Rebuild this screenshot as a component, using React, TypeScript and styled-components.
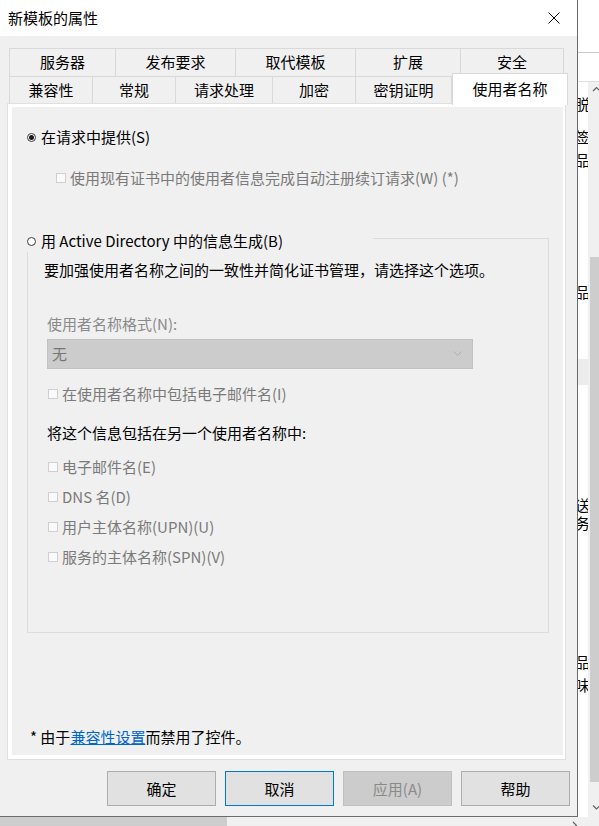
import React from "react"
import styled, { createGlobalStyle } from "styled-components"

const GlobalStyle = createGlobalStyle`
  html, body {
    margin: 0;
    padding: 0;
    background: #ffffff;
  }
  body {
    font-family: "Noto Sans CJK SC", "Noto Sans", sans-serif;
    font-size: 15px;
    color: #000000;
  }
  * {
    box-sizing: border-box;
  }
`

const Desktop = styled.div`
  position: relative;
  width: 599px;
  height: 826px;
  overflow: hidden;
  background: #ffffff;
`

// window behind the dialog, only its right strip and bottom edge show
const BackWindow = styled.div`
  position: absolute;
  left: 0;
  top: 0;
  width: 605px;
  height: 834px;
  display: flex;
  flex-direction: column;
  background: #ffffff;
`
const BackToolbar = styled.div`
  height: 53px;
  flex-shrink: 0;
  border-bottom: 1px solid #c9c9c9;
`
const BackHeader = styled.div`
  height: 29px;
  flex-shrink: 0;
  border-bottom: 1px solid #dedede;
`
const BackBody = styled.div`
  flex: 1;
  display: flex;
  min-height: 0;
`
const BackList = styled.div`
  flex: 1;
  display: flex;
  flex-direction: column;
  overflow: hidden;
`
const BackItem = styled.div<{ $gap: number; $h: number; $hl?: boolean }>`
  margin-top: ${({ $gap }) => $gap}px;
  height: ${({ $h }) => $h}px;
  flex-shrink: 0;
  display: flex;
  align-items: center;
  justify-content: flex-end;
  margin-right: -2px;
  line-height: 18px;
  background: ${({ $hl }) => ($hl ? "#ececec" : "transparent")};
`
const VScroll = styled.div`
  width: 17px;
  flex-shrink: 0;
  display: flex;
  flex-direction: column;
  background: #f0f0f0;
`
const ScrollArrow = styled.div`
  width: 17px;
  height: 17px;
  flex-shrink: 0;
  display: flex;
  align-items: center;
  justify-content: center;
`
const VTrack = styled.div`
  flex: 1;
  display: flex;
  flex-direction: column;
`
const VThumb = styled.div`
  margin-top: 158px;
  height: 525px;
  margin-left: 2px;
  margin-right: 2px;
  background: #cdcdcd;
`
const HScroll = styled.div`
  height: 17px;
  flex-shrink: 0;
  display: flex;
  background: #f0f0f0;
`
const HThumb = styled.div`
  width: 227px;
  margin: 0 0 8px 0;
  background: #cdcdcd;
`
const HTrack = styled.div`
  flex: 1;
`
const HArrowEnd = styled(ScrollArrow)`
  margin-right: 21px;
`

// dialog
const Dialog = styled.div`
  position: absolute;
  left: 0;
  top: 0;
  width: 578px;
  height: 817px;
  display: flex;
  flex-direction: column;
  background: #f0f0f0;
  border-right: 1px solid #6b6b6b;
  border-bottom: 1px solid #6b6b6b;
`
const TitleBar = styled.div`
  height: 36px;
  flex-shrink: 0;
  display: flex;
  align-items: center;
  justify-content: space-between;
  padding-left: 8px;
  background: #ffffff;
`
const Title = styled.div`
  font-size: 15px;
  line-height: 20px;
  margin-top: -1px;
`
const CloseButton = styled.div`
  width: 44px;
  height: 36px;
  display: flex;
  align-items: center;
  justify-content: center;
  margin-right: 1px;
`
const Body = styled.div`
  flex: 1;
  display: flex;
  flex-direction: column;
  padding: 12px 0 0 7px;
`
const TabStrip = styled.div`
  margin-left: 2px;
  display: flex;
  flex-direction: column;
`
const TabRow = styled.div<{ $second?: boolean }>`
  display: flex;
  height: ${({ $second }) => ($second ? 28 : 29)}px;
  margin-top: ${({ $second }) => ($second ? -1 : 0)}px;
`
const Tab = styled.div<{ $w: number; $first?: boolean }>`
  width: ${({ $w }) => $w}px;
  margin-left: ${({ $first }) => ($first ? 0 : -1)}px;
  display: flex;
  align-items: center;
  justify-content: center;
  padding-bottom: 1px;
  border: 1px solid #d9d9d9;
  background: #f0f0f0;
  font-size: 15px;
  line-height: 20px;
`
const ActiveTab = styled.div<{ $w: number }>`
  position: relative;
  z-index: 2;
  width: ${({ $w }) => $w}px;
  height: 32px;
  margin-top: -3px;
  display: flex;
  align-items: center;
  justify-content: center;
  padding-bottom: 2px;
  border: 1px solid #d9d9d9;
  border-bottom: none;
  background: #ffffff;
  font-size: 15px;
  line-height: 20px;
`
const Panel = styled.div`
  width: 559px;
  height: 657px;
  margin-top: -1px;
  padding: 3px 2px 4px 4px;
  border: 1px solid #e0e0e0;
  background: #ffffff;
`
const Page = styled.div`
  height: 100%;
  display: flex;
  flex-direction: column;
  background: #f0f0f0;
`
const RadioRow = styled.div<{ $top: number; $legend?: boolean }>`
  position: ${({ $legend }) => ($legend ? "relative" : "static")};
  z-index: 1;
  margin-top: ${({ $top }) => $top}px;
  margin-left: 15px;
  width: ${({ $legend }) => ($legend ? "346px" : "auto")};
  height: ${({ $legend }) => ($legend ? 22 : 20)}px;
  display: flex;
  align-items: center;
  gap: 5px;
  background: #f0f0f0;
  line-height: 20px;
`
const RadioDot = styled.span<{ $on?: boolean }>`
  width: 9px;
  height: 9px;
  flex-shrink: 0;
  border-radius: 50%;
  border: 1px solid #3c3c3c;
  background: #ffffff;
  display: flex;
  align-items: center;
  justify-content: center;
  &::after {
    content: "";
    display: ${({ $on }) => ($on ? "block" : "none")};
    width: 5px;
    height: 5px;
    border-radius: 50%;
    background: #1a1a1a;
  }
`
const CheckRow = styled.div<{ $top: number; $left: number }>`
  margin-top: ${({ $top }) => $top}px;
  margin-left: ${({ $left }) => $left}px;
  height: 20px;
  display: flex;
  align-items: center;
  gap: 4px;
  color: #7a7a7a;
  line-height: 20px;
`
const CheckBox = styled.span`
  width: 10px;
  height: 10px;
  flex-shrink: 0;
  border: 1px solid #cfcfcf;
  background: #fafafa;
`
const GroupBox = styled.div`
  margin-top: -14px;
  margin-left: 15px;
  width: 522px;
  height: 395px;
  flex-shrink: 0;
  display: flex;
  flex-direction: column;
  padding-top: 21px;
  border: 1px solid #dcdcdc;
`
const GroupText = styled.div<{ $top: number; $left: number; $muted?: boolean }>`
  margin-top: ${({ $top }) => $top}px;
  margin-left: ${({ $left }) => $left}px;
  height: 20px;
  line-height: 20px;
  color: ${({ $muted }) => ($muted ? "#8a8a8a" : "#000000")};
`
const Select = styled.div`
  margin-top: 5px;
  margin-left: 19px;
  width: 426px;
  height: 30px;
  flex-shrink: 0;
  display: flex;
  align-items: center;
  justify-content: space-between;
  padding: 0 10px 0 4px;
  border: 1px solid #c2c2c2;
  background: #cccccc;
  color: #767676;
  line-height: 20px;
`
const Footnote = styled.div`
  margin-top: auto;
  margin-bottom: 8px;
  margin-left: 18px;
  height: 20px;
  line-height: 20px;
`
const Link = styled.span`
  color: #0066cc;
  text-decoration: underline;
`
const ButtonRow = styled.div`
  margin-top: 11px;
  display: flex;
  justify-content: flex-end;
  gap: 9px;
  padding-right: 7px;
`
const Button = styled.div<{ $focus?: boolean; $disabled?: boolean }>`
  width: 109px;
  height: 35px;
  display: flex;
  align-items: center;
  justify-content: center;
  font-size: 15px;
  line-height: 20px;
  border: 1px solid
    ${({ $focus, $disabled }) =>
      $focus ? "#0078d7" : $disabled ? "#bfbfbf" : "#adadad"};
  background: ${({ $disabled }) => ($disabled ? "#cccccc" : "#e1e1e1")};
  color: ${({ $disabled }) => ($disabled ? "#8a8a8a" : "#000000")};
`

const row1 = [
  { label: "服务器", w: 107 },
  { label: "发布要求", w: 121 },
  { label: "取代模板", w: 121 },
  { label: "扩展", w: 106 },
  { label: "安全", w: 104 },
]
const row2 = [
  { label: "兼容性", w: 84 },
  { label: "常规", w: 84 },
  { label: "请求处理", w: 98 },
  { label: "加密", w: 84 },
  { label: "密钥证明", w: 97 },
]

const otherNames = [
  "电子邮件名(E)",
  "DNS 名(D)",
  "用户主体名称(UPN)(U)",
  "服务的主体名称(SPN)(V)",
]

const backItems = [
  { gap: 12, h: 20, text: "邮件脱" },
  { gap: 13, h: 20, text: "数字签" },
  { gap: 3, h: 20, text: "产品" },
  { gap: 112, h: 20, text: "产品" },
  { gap: 57, h: 26, text: "", hl: true },
  { gap: 111, h: 18, text: "发送" },
  { gap: 0, h: 18, text: "服务" },
  { gap: 120, h: 20, text: "产品" },
  { gap: 3, h: 20, text: "口味" },
]

const Chevron = ({ dir }: { dir: "up" | "down" | "right" }) => {
  const d =
    dir === "up"
      ? "M1 5 L4.5 1.5 L8 5"
      : dir === "down"
      ? "M1 1.5 L4.5 5 L8 1.5"
      : "M2 1 L5.5 4.5 L2 8"
  return (
    <svg width="9" height="9" viewBox="0 0 9 9">
      <path d={d} fill="none" stroke="#606060" strokeWidth="1.2" />
    </svg>
  )
}

const App = () => {
  return (
    <>
      <GlobalStyle />
      <Desktop>
        <BackWindow>
          <BackToolbar />
          <BackHeader />
          <BackBody>
            <BackList>
              {backItems.map((item, index) => (
                <BackItem key={index} $gap={item.gap} $h={item.h} $hl={item.hl}>
                  {item.text}
                </BackItem>
              ))}
            </BackList>
            <VScroll>
              <ScrollArrow>
                <Chevron dir="up" />
              </ScrollArrow>
              <VTrack>
                <VThumb />
              </VTrack>
              <ScrollArrow>
                <Chevron dir="down" />
              </ScrollArrow>
            </VScroll>
          </BackBody>
          <HScroll>
            <HThumb />
            <HTrack />
            <HArrowEnd>
              <Chevron dir="right" />
            </HArrowEnd>
          </HScroll>
        </BackWindow>

        <Dialog>
          <TitleBar>
            <Title>新模板的属性</Title>
            <CloseButton>
              <svg width="12" height="12" viewBox="0 0 12 12">
                <path d="M0.5 0.5 L11.5 11.5 M11.5 0.5 L0.5 11.5" stroke="#000" strokeWidth="1" />
              </svg>
            </CloseButton>
          </TitleBar>
          <Body>
            <TabStrip>
              <TabRow>
                {row1.map((t, i) => (
                  <Tab key={t.label} $w={t.w} $first={i === 0}>
                    {t.label}
                  </Tab>
                ))}
              </TabRow>
              <TabRow $second>
                {row2.map((t, i) => (
                  <Tab key={t.label} $w={t.w} $first={i === 0}>
                    {t.label}
                  </Tab>
                ))}
                <ActiveTab $w={116}>使用者名称</ActiveTab>
              </TabRow>
            </TabStrip>
            <Panel>
              <Page>
                <RadioRow $top={20}>
                  <RadioDot $on />
                  在请求中提供(S)
                </RadioRow>
                <CheckRow $top={21} $left={44}>
                  <CheckBox />
                  使用现有证书中的使用者信息完成自动注册续订请求(W) (*)
                </CheckRow>
                <RadioRow $top={42} $legend>
                  <RadioDot />
                  用 Active Directory 中的信息生成(B)
                </RadioRow>
                <GroupBox>
                  <GroupText $top={0} $left={16}>
                    要加强使用者名称之间的一致性并简化证书管理，请选择这个选项。
                  </GroupText>
                  <GroupText $top={34} $left={19} $muted>
                    使用者名称格式(N):
                  </GroupText>
                  <Select>
                    <span>无</span>
                    <svg width="9" height="6" viewBox="0 0 9 6">
                      <path d="M0.5 0.5 L4.5 4.5 L8.5 0.5" fill="none" stroke="#b0b0b0" strokeWidth="1" />
                    </svg>
                  </Select>
                  <CheckRow $top={15} $left={20}>
                    <CheckBox />
                    在使用者名称中包括电子邮件名(I)
                  </CheckRow>
                  <GroupText $top={19} $left={19}>
                    将这个信息包括在另一个使用者名称中:
                  </GroupText>
                  {otherNames.map((name, i) => (
                    <CheckRow key={name} $top={i === 0 ? 14 : 10} $left={20}>
                      <CheckBox />
                      {name}
                    </CheckRow>
                  ))}
                </GroupBox>
                <Footnote>
                  * 由于<Link>兼容性设置</Link>而禁用了控件。
                </Footnote>
              </Page>
            </Panel>
            <ButtonRow>
              <Button>确定</Button>
              <Button $focus>取消</Button>
              <Button $disabled>应用(A)</Button>
              <Button>帮助</Button>
            </ButtonRow>
          </Body>
        </Dialog>
      </Desktop>
    </>
  )
}

export default App
